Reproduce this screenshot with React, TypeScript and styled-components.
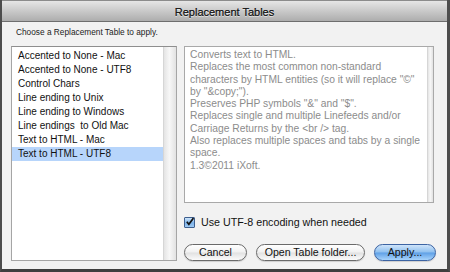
import React, { useState } from 'react';
import styled, { createGlobalStyle } from 'styled-components';

const GlobalStyle = createGlobalStyle`
  html, body { margin: 0; padding: 0; background: #4b4b4b; }
  * { box-sizing: border-box; }
`;

const tables = [
  'Accented to None - Mac',
  'Accented to None - UTF8',
  'Control Chars',
  'Line ending to Unix',
  'Line ending to Windows',
  'Line endings  to Old Mac',
  'Text to HTML - Mac',
  'Text to HTML - UTF8',
];

const description = [
  'Converts text to HTML.',
  'Replaces the most common non-standard',
  'characters by HTML entities (so it will replace "©"',
  'by "&copy;").',
  'Preserves PHP symbols "&" and "$".',
  'Replaces single and multiple Linefeeds and/or',
  'Carriage Returns by the <br /> tag.',
  'Also replaces multiple spaces and tabs by a single',
  'space.',
  '1.3©2011 iXoft.',
];

const App: React.FC = () => {
  const [selected, setSelected] = useState(7);
  const [utf8, setUtf8] = useState(true);

  return (
    <>
      <GlobalStyle />
      <Window>
        <TitleBar>Replacement Tables</TitleBar>
        <Body>
          <Prompt>Choose a Replacement Table to apply.</Prompt>
          <Main>
            <ListBox>
              <Items>
                {tables.map((t, i) => (
                  <Item key={t} active={i === selected} onClick={() => setSelected(i)}>
                    {t}
                  </Item>
                ))}
              </Items>
              <Track wide />
            </ListBox>
            <RightColumn>
              <Description>
                <DescText>
                  {description.map((line) => (
                    <div key={line}>{line}</div>
                  ))}
                </DescText>
                <Track />
              </Description>
              <CheckRow onClick={() => setUtf8(!utf8)}>
                <CheckBox>
                  {utf8 && (
                    <svg width="10" height="10" viewBox="0 0 10 10">
                      <path d="M2 4.6 L4.3 7.6 L9.4 0.6" fill="none" stroke="#111" strokeWidth="1.8" />
                    </svg>
                  )}
                </CheckBox>
                Use UTF-8 encoding when needed
              </CheckRow>
              <Buttons>
                <Button width={63}>Cancel</Button>
                <Button width={109}>Open Table folder...</Button>
                <Button width={62} primary>Apply...</Button>
              </Buttons>
            </RightColumn>
          </Main>
        </Body>
      </Window>
    </>
  );
};

const Window = styled.div`
  width: 450px;
  height: 272px;
  display: flex;
  flex-direction: column;
  background: #f2f2f2;
  border-left: 2px solid #4d4d4d;
  border-right: 3px solid #4d4d4d;
  border-bottom: 3px solid #3f3f3f;
  font-family: "Liberation Sans", Arial, sans-serif;
  overflow: hidden;
`;

const TitleBar = styled.div`
  height: 22px;
  flex: none;
  display: flex;
  align-items: center;
  justify-content: center;
  padding-top: 1px;
  font-size: 11px;
  color: #1c1c1c;
  text-shadow: 0 1px 0 rgba(255, 255, 255, 0.6), 0 0 0.5px #1c1c1c;
  background: linear-gradient(#e6e6e6, #c9c9c9 50%, #adadad);
  border-top: 1px solid #8c8c8c;
  border-bottom: 1px solid #6e6e6e;
`;

const Body = styled.div`
  flex: 1;
  display: flex;
  flex-direction: column;
  padding: 4px 0 0 9px;
`;

const Prompt = styled.div`
  height: 13px;
  padding-left: 5px;
  font-size: 8.3px;
  line-height: 13px;
  color: #222;
`;

const Main = styled.div`
  margin-top: 7px;
  display: grid;
  grid-template-columns: 166px 252px;
  column-gap: 7px;
  height: 212px;
`;

const ListBox = styled.div`
  display: flex;
  background: #fff;
  border: 1px solid #a5a5a5;
  border-top-color: #8e8e8e;
`;

const Items = styled.div`
  flex: 1;
  padding-top: 2px;
`;

const Item = styled.div<{ active?: boolean }>`
  height: 14px;
  line-height: 14px;
  padding-left: 6px;
  font-size: 10px;
  color: #111;
  white-space: pre;
  background: ${({ active }) => (active ? '#b7d5fb' : 'transparent')};
`;

const Track = styled.div<{ wide?: boolean }>`
  flex: none;
  width: ${({ wide }) => (wide ? '13px' : '6px')};
  border-left: 1px solid #d6d6d6;
  background: linear-gradient(to right, #e4e4e4, #f7f7f7 45%, #e2e2e2);
`;

const RightColumn = styled.div`
  display: flex;
  flex-direction: column;
`;

const Description = styled.div`
  height: 157px;
  display: flex;
  background: #fff;
  border: 1px solid #a9a9a9;
  margin-right: 2px;
`;

const DescText = styled.div`
  flex: 1;
  padding: 2px 0 0 5px;
  font-size: 10.3px;
  line-height: 12.3px;
  color: #8c8c8c;
  white-space: pre;
`;

const CheckRow = styled.div`
  margin-top: 12px;
  height: 14px;
  display: flex;
  align-items: center;
  gap: 6px;
  font-size: 10.7px;
  color: #111;
  cursor: default;
`;

const CheckBox = styled.div`
  width: 11px;
  height: 11px;
  display: flex;
  align-items: center;
  justify-content: center;
  border: 1px solid #3e5f8e;
  border-radius: 1px;
  background: linear-gradient(#cfe6fb, #7cb3ea 55%, #9fcaf4);
`;

const Buttons = styled.div`
  margin-top: 15px;
  display: flex;
  gap: 9px;
`;

const Button = styled.button<{ width: number; primary?: boolean }>`
  width: ${({ width }) => width}px;
  height: 17px;
  padding: 0;
  border-radius: 9px;
  font-family: inherit;
  font-size: 10.6px;
  line-height: 15px;
  color: #111;
  border: 1px solid ${({ primary }) => (primary ? '#3d64a3' : '#6a6a6a')};
  background: ${({ primary }) =>
    primary
      ? 'linear-gradient(#cfe4fa, #8fc0ef 48%, #5fa0e6 52%, #a7d3fb)'
      : 'linear-gradient(#ffffff, #f1f1f1 48%, #e1e1e1 52%, #fbfbfb)'};
  box-shadow: 0 1px 1px rgba(0, 0, 0, 0.15);
`;

export default App;
